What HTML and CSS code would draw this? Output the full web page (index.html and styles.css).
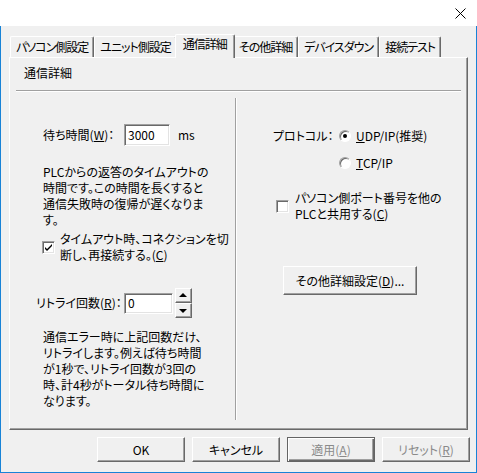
FILE: index.html
```html
<!DOCTYPE html>
<html lang="ja">
<head>
    <meta charset="UTF-8">
    <meta name="viewport" content="width=device-width, initial-scale=1.0">
    <title>通信詳細</title>
    <link rel="stylesheet" href="styles.css">
</head>
<body>
    <div class="window">
        <div class="titlebar">
            <svg class="close" width="11" height="11" viewBox="0 0 11 11">
                <path d="M0.5 0.5 L10.5 10.5 M10.5 0.5 L0.5 10.5" stroke="#000" stroke-width="1" fill="none"/>
            </svg>
        </div>

        <div class="dialog">
            <div class="tabs">
                <div class="tab">パソコン側設定</div>
                <div class="tab">ユニット側設定</div>
                <div class="tab selected">通信詳細</div>
                <div class="tab">その他詳細</div>
                <div class="tab">デバイスダウン</div>
                <div class="tab">接続テスト</div>
            </div>

            <div class="panel">
                <div class="group_title">通信詳細</div>
                <div class="rule"></div>

                <div class="columns">
                    <div class="col left">
                        <div class="wait_row">
                            <span class="label wait_label">待ち時間(<u>W</u>)：</span>
                            <div class="field wait_field">3000</div>
                            <span class="unit">ms</span>
                        </div>
                        <p class="note">PLCからの返答のタイムアウトの<br>時間です。この時間を長くすると<br>通信失敗時の復帰が遅くなりま<br>す。</p>

                        <div class="check_row">
                            <span class="checkbox checked">
                                <svg width="7" height="7" viewBox="0 0 7 7"><path d="M0 3 L2 5 L7 0 L7 2 L2 7 L0 5 Z" fill="#000"/></svg>
                            </span>
                            <span class="check_text">タイムアウト時、コネクションを切<br>断し、再接続する。(<u>C</u>)</span>
                        </div>

                        <div class="retry_row">
                            <span class="label retry_label">リトライ回数(<u>R</u>)：</span>
                            <div class="field retry_field">0</div>
                            <div class="spin">
                                <span class="spin_btn up"></span>
                                <span class="spin_btn down"></span>
                            </div>
                        </div>
                        <p class="note note_retry">通信エラー時に上記回数だけ、<br>リトライします。例えば待ち時間<br>が1秒で、リトライ回数が3回の<br>時、計4秒がトータル待ち時間に<br>なります。</p>
                    </div>

                    <div class="separator"></div>

                    <div class="col right">
                        <div class="protocol">
                            <span class="label protocol_label">プロトコル：</span>
                            <div class="radios">
                                <div class="radio_row"><span class="radio checked"></span><span><u>U</u>DP/IP(推奨)</span></div>
                                <div class="radio_row"><span class="radio"></span><span><u>T</u>CP/IP</span></div>
                            </div>
                        </div>

                        <div class="check_row share_row">
                            <span class="checkbox"></span>
                            <span class="check_text">パソコン側ポート番号を他の<br>PLCと共用する(<u>C</u>)</span>
                        </div>

                        <button class="btn more_btn">その他詳細設定(<u>D</u>)...</button>
                    </div>
                </div>
            </div>

            <div class="actions">
                <button class="btn">OK</button>
                <button class="btn">キャンセル</button>
                <button class="btn default disabled">適用(<u>A</u>)</button>
                <button class="btn disabled">リセット(<u>R</u>)</button>
            </div>
        </div>
    </div>
</body>
</html>
```

FILE: styles.css
```css
:root{
    --face: #f0f0f0;
    --light: #ffffff;
    --shadow: #a0a0a0;
    --dark: #696969;
    --accent: #1883d7;
}

*{
    box-sizing: border-box;
}

body{
    margin: 0;
    font-family: "Noto Sans CJK JP", "Noto Sans", sans-serif;
    font-size: 12px;
    font-feature-settings: "palt";
    color: #000;
}

.window{
    width: 477px;
    height: 473px;
    display: flex;
    flex-direction: column;
}

.titlebar{
    height: 26px;
    background-color: #fff;
    display: flex;
    justify-content: flex-end;
    align-items: center;
}
.close{
    margin-right: 11px;
}

.dialog{
    flex: 1;
    background-color: var(--face);
    border: 1px solid var(--accent);
    border-top: none;
    padding: 8px 8px 0 8px;
    display: flex;
    flex-direction: column;
}

/* タブ */
.tabs{
    height: 23px;
    display: flex;
    align-items: flex-end;
    padding-left: 1px;
    position: relative;
    z-index: 1;
}
.tab{
    height: 21px;
    padding: 2px 5px 0 5px;
    line-height: 16px;
    letter-spacing: -1px;
    white-space: nowrap;
    background-color: var(--face);
    border-top: 1px solid var(--light);
    border-left: 1px solid var(--light);
    border-right: 1px solid var(--dark);
    box-shadow: inset -1px 0 var(--shadow);
    border-radius: 2px 2px 0 0;
}
.tab.selected{
    height: 24px;
    margin: 0 -2px -1px -2px;
    padding: 1px 7px 0 7px;
    position: relative;
    z-index: 2;
}

.panel{
    height: 373px;
    border: 1px solid;
    border-color: var(--light) var(--dark) var(--dark) var(--light);
    box-shadow: inset -1px -1px var(--shadow);
    display: flex;
    flex-direction: column;
}

.group_title{
    margin-left: 14px;
    padding-top: 7px;
    line-height: 16px;
}
.rule{
    margin: 9px 6px 0 6px;
    height: 2px;
    border-top: 1px solid var(--shadow);
    border-bottom: 1px solid var(--light);
}

.columns{
    margin: 6px 6px 0 6px;
    height: 322px;
    display: flex;
}
.col{
    line-height: 16px;
    white-space: nowrap;
}
.col.left{
    width: 219px;
    padding-left: 20px;
}
.col.right{
    flex: 1;
    padding-left: 36px;
}
.separator{
    width: 2px;
    border-left: 1px solid var(--shadow);
    border-right: 1px solid var(--light);
}

.label{
    display: inline-block;
}

/* 入力欄 */
.field{
    background-color: #fff;
    border: 1px solid;
    border-color: var(--shadow) var(--light) var(--light) var(--shadow);
    box-shadow: inset 1px 1px var(--dark), inset -1px -1px #e3e3e3;
    padding: 0 3px;
    display: flex;
    align-items: center;
}

.wait_row{
    margin-top: 26px;
    padding-left: 7px;
    height: 22px;
    display: flex;
    align-items: center;
}
.wait_label{
    width: 81px;
}
.wait_field{
    width: 46px;
    height: 22px;
}
.unit{
    margin-left: 8px;
}

.note{
    margin: 18px 0 0 7px;
}

.check_row{
    margin: 3px 0 0 6px;
    display: flex;
    align-items: center;
}
.checkbox{
    width: 13px;
    height: 13px;
    flex: none;
    background-color: #fff;
    border: 1px solid;
    border-color: var(--shadow) var(--light) var(--light) var(--shadow);
    box-shadow: inset 1px 1px var(--dark), inset -1px -1px #e3e3e3;
    display: flex;
    align-items: center;
    justify-content: center;
}
.check_text{
    margin-left: 5px;
}

.retry_row{
    margin-top: 25px;
    height: 30px;
    display: flex;
    align-items: center;
}
.retry_label{
    width: 88px;
}
.retry_field{
    width: 49px;
    height: 21px;
}
.spin{
    margin-left: 2px;
    width: 17px;
    height: 30px;
    display: flex;
    flex-direction: column;
}
.spin_btn{
    height: 15px;
    background-color: var(--face);
    border: 1px solid;
    border-color: var(--light) var(--dark) var(--dark) var(--light);
    box-shadow: inset -1px -1px var(--shadow);
    position: relative;
}
.spin_btn::after{
    content: "";
    position: absolute;
    left: 3px;
    top: 4px;
    border-left: 4px solid transparent;
    border-right: 4px solid transparent;
}
.spin_btn.up::after{
    border-bottom: 4px solid #000;
}
.spin_btn.down::after{
    top: 5px;
    border-top: 4px solid #000;
}

.note_retry{
    margin-top: 11px;
}

/* 右側 */
.protocol{
    margin-top: 30px;
    display: flex;
}
.protocol_label{
    width: 66px;
}
.radios{
    display: flex;
    flex-direction: column;
    gap: 11px;
}
.radio_row{
    display: flex;
    align-items: center;
}
.radio{
    width: 12px;
    height: 12px;
    margin-right: 5px;
    border-radius: 50%;
    background-color: #fff;
    border: 1px solid;
    border-color: var(--shadow) var(--light) var(--light) var(--shadow);
    box-shadow: inset 1px 1px var(--dark);
    display: flex;
    align-items: center;
    justify-content: center;
}
.radio.checked::after{
    content: "";
    width: 4px;
    height: 4px;
    border-radius: 50%;
    background-color: #000;
}

.share_row{
    margin: 19px 0 0 3px;
}
.share_row .check_text{
    margin-left: 6px;
}

/* ボタン */
.btn{
    font: inherit;
    color: #000;
    height: 25px;
    width: 88px;
    padding: 0;
    background-color: var(--face);
    border: 1px solid;
    border-color: var(--light) var(--dark) var(--dark) var(--light);
    box-shadow: inset -1px -1px var(--shadow);
}
.more_btn{
    display: block;
    margin: 44px 0 0 10px;
    width: 134px;
    height: 29px;
}
.btn.disabled{
    color: #8a8a8a;
}
.btn.default{
    border: 1px solid #646464;
    box-shadow: inset 1px 1px var(--light), inset -1px -1px var(--dark), inset -2px -2px var(--shadow);
}

.actions{
    margin: 7px -2px 0 0;
    display: flex;
    justify-content: flex-end;
    gap: 7px;
}
```
